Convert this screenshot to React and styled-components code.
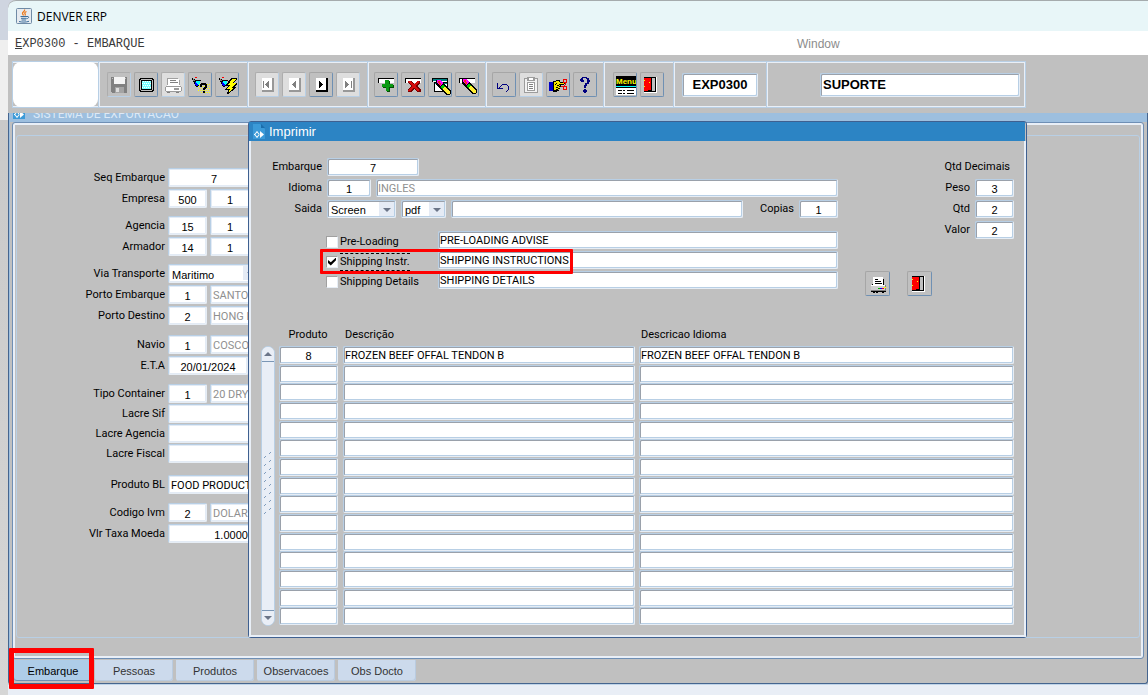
import React from 'react';
import styled, { createGlobalStyle, css } from 'styled-components';

const GlobalStyle = createGlobalStyle`
  * {
    box-sizing: border-box;
  }

  body {
    margin: 0;
    background: #d4d4d4;
    font-family: "Liberation Sans", Arial, sans-serif;
    font-size: 11px;
    color: #000;
  }

  button, input, select {
    font: inherit;
    color: inherit;
    margin: 0;
    padding: 0;
  }
`;

/* ---------- icons ---------- */

const Glyph = ({ children, size = 22 }) => (
  <svg width={size} height={size} viewBox={`0 0 ${size} ${size}`} shapeRendering="crispEdges" aria-hidden="true">
    {children}
  </svg>
);

const SaveIcon = () => (
  <Glyph>
    <path d="M3 3h16v16H4l-1-1z" fill="#808080" />
    <path d="M6 3h11v7H6z" fill="#f4f4f4" />
    <path d="M4 4h1v1H4zM17 4h1v1h-1z" fill="#c0c0c0" />
    <path d="M7 13h9v6H7z" fill="#a4a4a4" />
    <path d="M8 14h3v4H8z" fill="#dcdcdc" />
  </Glyph>
);

const MonitorIcon = () => (
  <Glyph>
    <path d="M5 4h13v1h1v12h-1v1H5v-1H4V5h1z" fill="#000" />
    <path d="M5 6h1V5h11v1h1v10h-1v1H6v-1H5z" fill="#c0c0c0" />
    <path d="M6 6h11v10H6z" fill="#000" />
    <path d="M7 7h9v8H7z" fill="#7ff" />
    <path d="M8 7.500h8M7 9.500h9M8 11.500h8M7 13.500h9" stroke="#fff" strokeDasharray="1 1" />
  </Glyph>
);

const PrintDisabledIcon = () => (
  <Glyph>
    <path d="M6 4h10v1h1v6H6z" fill="#fff" />
    <path d="M6 4h10v1H6zM5 4h1v8H5zM17 6h1v6h-1z" fill="#a0a0a0" />
    <path d="M8 6h6v1H8zM8 8h8v1H8z" fill="#808080" />
    <path d="M5 11h13v1H5zM3 13h17v4H3z" fill="#fff" />
    <path d="M4 12h15v1H4zM3 13h1v4H3zM19 13h1v4h-1zM4 17h15v1H4zM12 14h5v2h-5z" fill="#9a9a9a" />
    <path d="M5 18h3v1H5zM14 18h3v1h-3z" fill="#808080" />
  </Glyph>
);

const torch = (
  <>
    <path d="M3 4h1v1h2v1h6v1h-1v4h-1v1H9v1H7v-1H6v-2H5V8H4V6H3z" fill="#000" />
    <path d="M7 7h4v3h-1v1H9v-1H8V9H7z" fill="#0ff" />
    <path d="M6 8h1v1h1v1h1v2H7v-1H6z" fill="#00f" />
    <path d="M4 5h1v1h1v1H4z" fill="#808080" />
    <path d="M6 3h2v1H6z" fill="#f00" />
  </>
);

const FindIcon = () => (
  <Glyph>
    {torch}
    <path d="M10 10.500h11M9 12.500h12M10 14.500h11M9 16.500h12M12 18.500h9" stroke="#ff0" strokeDasharray="1 1" />
    <path d="M12 9h5v1h1v4h-1v1h-1v1h-2v-2h1v-1h1v-2h-3v2h-2v-3h1zM14 17h2v2h-2z" fill="#000" />
  </Glyph>
);

const RunFindIcon = () => (
  <Glyph>
    {torch}
    <path d="M15 4h6v1l-3 4h3v1l-3 3h2v1l-8 6h-1l1-4H9v-1l3-3h-2v-1z" fill="#000" />
    <path d="M16 5h4l-3 4h3l-4 5h2l-5 4 1-3h-3l3-4h-2z" fill="#ff0" />
  </Glyph>
);

const NavIcon = ({ shape, off }) => (
  <Glyph>
    <path d="M6 4h12v14H6z" fill={off ? '#989898' : '#000'} />
    <path d="M6 4h10v12H6z" fill="#fff" />
    <path d={shape} fill={off ? '#808080' : '#000'} />
  </Glyph>
);

const navShapes = {
  first: 'M7 7h1v7H7zM12 7h1v7h-1v-1h-1v-1h-1v-1H9v-1h1V9h1V8h1z',
  prev: 'M12 7h1v7h-1v-1h-1v-1h-1v-1H9v-1h1V9h1V8h1z',
  next: 'M9 7h1v1h1v1h1v1h1v1h-1v1h-1v1h-1v1H9z',
  last: 'M8 7h1v1h1v1h1v1h1v1h-1v1h-1v1H9v1H8zM14 7h1v7h-1z',
};

const fieldBar = (
  <>
    <path d="M3 4h16v5H3z" fill="#000" />
    <path d="M4 5h15v4H4z" fill="#fff" />
  </>
);

const InsertIcon = () => (
  <Glyph>
    {fieldBar}
    <path d="M11 7h4v4h4v3h-4v4h-3v-4H8v-3h3z" fill="#044d04" />
    <path d="M10 6h4v4h4v3h-4v4h-3v-4H7v-3h3z" fill="#0a9a12" />
  </Glyph>
);

const DeleteIcon = () => (
  <Glyph>
    {fieldBar}
    <path d="M6 7h3l3 3 3-3h3v2l-3 3 4 4v2h-3l-4-3-3 3H6v-2l3-4-3-3z" fill="#700" />
    <path d="M6 7h2l4 3 3-3h2v1l-4 4 4 4v1h-2l-3-3-4 3H6v-1l4-4-4-4z" fill="#d40b0b" />
  </Glyph>
);

const pencil = (
  <>
    <path d="M6 5h5l10 11v3l-2 1h-3L6 9z" fill="#000" />
    <path d="M7 5h3l3 3-3 3-3-3z" fill="#f0f" />
    <path d="M8 6h2v2h1v2H9V8H8z" fill="#ff2020" />
    <path d="M13 9l2 3-3 2-2-2z" fill="#0c0" />
    <path d="M15 12l5 4v2l-1 1h-2l-5-5z" fill="#fe3" />
  </>
);

const ClearFormIcon = () => (
  <Glyph>
    <path d="M3 4h16v14H5V8H3z" fill="#000" />
    <path d="M4 5h14v2H4z" fill="#008080" />
    <path d="M4 7h14v1H4zM6 9h12v8H6z" fill="#fff" />
    <path d="M6 9h12v1H6z" fill="#008080" />
    <g transform="translate(1 1)">{pencil}</g>
  </Glyph>
);

const ClearRecordIcon = () => (
  <Glyph>
    {fieldBar}
    {pencil}
  </Glyph>
);

const UndoIcon = () => (
  <Glyph>
    <path d="M4 9h1v5h1v-1h1v-1h1v-1h1v-1h5v1h1v1h1v4h-1v1h-1v1h-1v-1h1v-1h1v-4h-1v-1H9v1H8v1H7v1h3v1H4z" fill="#000080" />
  </Glyph>
);

const PasteDisabledIcon = () => (
  <Glyph>
    <path d="M4 4h14v15H4z" fill="#9c9c9c" />
    <path d="M5 5h12v13H5z" fill="#f2f2f2" />
    <path d="M7 3h8v4H7zM7 8h8v9H7z" fill="#9c9c9c" />
    <path d="M9 4h4v2H9zM8 9h6v7H8z" fill="#fff" />
    <path d="M9 10h4v1H9zM9 12h4v1H9zM9 14h4v1H9z" fill="#808080" />
  </Glyph>
);

const CutHandIcon = () => (
  <Glyph>
    <path d="M2 8h4v9H2z" fill="#0000c8" />
    <path d="M6 7h3V6h4v2h4v1h1v1h-1v1h-3v2h-1v2h-1v2h-2v1H6z" fill="#000" />
    <path d="M7 8h2V7h3v1h1v1h4v1h-5v1h1v1h-1v1h1v1h-2v1h1v1H7z" fill="#f5e600" />
    <path d="M9 9h1v1H9zM10 11h2v1h-2zM9 13h2v1H9zM9 15h2v1H9zM8 10h1v1H8z" fill="#000" />
    <path d="M16.500 5.500h3v3h-3zM16.500 12.500h3v3h-3zM14 12.500h3l2-3" stroke="#e00" fill="none" />
  </Glyph>
);

const HelpIcon = () => (
  <Glyph>
    <path d="M8 3h5v1h2v2h1v2h-1v2h-2v2h-1v2h-2v-3h1V9h2V5h-1V4h-3v2h1v2H7V7H6V5h1V4h1zM10 15h2v1h1v2h-1v1h-2v-1H9v-2h1z" fill="#000080" />
  </Glyph>
);

const MenuWord = styled.text`
  font-family: "Liberation Sans Narrow", "Liberation Sans", Arial, sans-serif;
  font-size: 8px;
  font-weight: bold;
  fill: #ffff00;
`;

const MenuIcon = () => (
  <Glyph>
    <path d="M2 2h20v9H2z" fill="#000" />
    <MenuWord x="2" y="10">Menu</MenuWord>
    <path d="M2 12h20v1H2z" fill="#0ff" />
    <path d="M2 14h20v7H2z" fill="#fff" />
    <path d="M2 11h20v1H2zM2 13h20v1H2zM4 16h4v1H4zM9 16h2v1H9zM13 16h7v1h-7zM4 19h4v1H4zM9 19h2v1H9zM13 19h7v1h-7z" fill="#000" />
  </Glyph>
);

const DoorIcon = () => (
  <Glyph>
    <path d="M3 3h13v16H3z" fill="#fff" />
    <path d="M3 3h12v15H3z" fill="#000" />
    <path d="M11 4h3v13h-3z" fill="#c0c0c0" />
    <path d="M3 4h7v12H9v1H3z" fill="#f00" />
    <path d="M8 8h1v1H8zM3 6h1v1H3zM3 12h1v1H3z" fill="#ff0" />
    <path d="M10 4h1v13h-1zM7 16h3v1H7z" fill="#000" />
  </Glyph>
);

const PrintIcon = () => (
  <Glyph>
    <path d="M6 4h10v8H6z" fill="#fff" />
    <path d="M8 6h3v1H8zM8 8h6v1H8zM8 10h7v1H8zM16 6h1v6h-1zM5 11h1v1H5z" fill="#000" />
    <path d="M4 12h15v6H4z" fill="#808080" />
    <path d="M4 12h14v1H4z" fill="#fff" />
    <path d="M4 13h14v4H4z" fill="#cfcfcf" />
    <path d="M4 18h15v1H4zM6 19h2v1H6zM9 19h2v1H9zM15 19h2v1h-2z" fill="#000" />
    <path d="M11 15h2v1h-2z" fill="#0a0" />
    <path d="M13 15h2v1h-2z" fill="#00f" />
    <path d="M15 15h2v1h-2z" fill="#f00" />
    <path d="M17 14h2v1h-2z" fill="#ff0" />
  </Glyph>
);

const JavaIcon = () => (
  <svg width="16" height="16" viewBox="0 0 16 16" aria-hidden="true">
    <rect x="0.500" y="0.500" width="15" height="15" rx="1" fill="#e6ebf0" stroke="#6f8ba6" />
    <path d="M8.500 1.500c1 2-2.500 2.500-2 4.200.2.800 1 1.300 1 1.800M10.500 3.500c-2 1-2 1.700-1.300 2.600.4.600 0 1-.4 1.400" stroke="#ec7a1c" strokeWidth="1.300" fill="none" />
    <path d="M4.500 8.500h6.500M5 10.300h5.500M5.500 12h4.500M11 8.500c2.500-.5 2 2-.5 2.300" stroke="#3d6f9c" fill="none" />
    <path d="M3 13.500c2.500.8 7.500.8 10-.2" stroke="#3d6f9c" fill="none" />
  </svg>
);

const DocIcon = () => (
  <svg width="13" height="15" viewBox="0 0 13 15" aria-hidden="true">
    <path d="M0 0h7l5 5v10H0z" fill="#3c9ad8" />
    <path d="M8 0l4 4H8z" fill="#1b6dab" />
    <path d="M4 7v7M1 10.500h2" stroke="#fff" />
    <circle cx="4" cy="10.500" r="2" fill="#3c9ad8" stroke="#fff" />
    <path d="M7 7l4 3.500L7 14z" fill="#fff" />
  </svg>
);

/* ---------- shell ---------- */

const Desktop = styled.div`
  min-height: 100vh;
  padding-left: 8px;
  display: flex;
  background: linear-gradient(#cfd5e0 0, #cfd5e0 40px, #efefef 40px, #efefef 120px, #c9c9c9 120px, #d6d6d6 100%);
`;

const AppWindow = styled.div`
  flex: 1;
  min-width: 0;
  display: flex;
  flex-direction: column;
  background: #c0c0c0;
  border-radius: 8px 0 0 0;
  overflow: hidden;
`;

const TitleBar = styled.header`
  display: flex;
  align-items: center;
  gap: 5px;
  height: 31px;
  padding-left: 8px;
  background: #e8f6f8;
  border-top: 1px solid #a5abad;
  border-radius: 8px 0 0 0;
  font-family: "Open Sans", "Noto Sans", sans-serif;
  font-size: 12px;
`;

const MenuBar = styled.nav`
  display: flex;
  align-items: center;
  height: 24px;
  padding: 1px 7px 0;
  background: #fff;
`;

const MenuLink = styled.a`
  flex: 0 0 782px;
  color: #3a3a3a;
  font-family: "Liberation Mono", "Courier New", monospace;
  font-size: 12px;
  text-decoration: none;

  &:last-child {
    flex: none;
    color: #8c8c8c;
    font-family: "Liberation Sans", Arial, sans-serif;
  }
`;

/* ---------- toolbar ---------- */

const ToolbarArea = styled.div`
  padding: 6px 122px 5px 4px;
`;

const Toolbar = styled.div`
  display: flex;
  height: 47px;
  border: 1px solid #b8cfe5;
  box-shadow: inset 0 1px 0 #e9eff7, inset 0 -1px 0 #e9eff7, inset -1px 0 0 #e9eff7;
`;

const Logo = styled.div`
  width: 85px;
  background: #fff;
  border-radius: 8px;
`;

const Section = styled.div`
  display: flex;
  align-items: center;
  gap: 3px;
  flex: ${({ $grow }) => ($grow ? '1' : 'none')};
  justify-content: ${({ $grow }) => ($grow ? 'flex-end' : 'flex-start')};
  padding: 0 ${({ $pad }) => $pad}px;
  border-left: 1px solid #b8cfe5;
  box-shadow: inset 1px 0 0 #e9eff7;
`;

const IconButton = styled.button`
  width: 24px;
  height: 25px;
  display: flex;
  align-items: center;
  justify-content: center;
  flex: none;
  background: #c0c0c0;
  border: 1px solid;
  border-color: #a6a6a6 #6f90b3 #6f90b3 #a6a6a6;
  border-radius: 2px;

  &:disabled {
    border-color: #adadad #b8cfe5 #b8cfe5 #adadad;
    background: ${({ $flat }) => ($flat ? '#c0c0c0' : '#dedede')};
  }
`;

/* ---------- fields ---------- */

const fieldFrame = css`
  height: ${({ $tall }) => ($tall ? '19px' : '18px')};
  background: #fff;
  border: 1px solid;
  border-color: #b8cfe5 #e6edf5 #e6edf5 #b8cfe5;
  border-radius: 2px;
  box-shadow: ${({ $tall }) =>
    $tall ? 'inset 0 0 0 1px #e3ebf5' : 'inset 1px 1px 0 #9aa1ab, inset -1px -1px 0 #b8cfe5'};
`;

const Field = styled.input`
  ${fieldFrame}
  width: ${({ $width }) => ($width ? `${$width}px` : 'auto')};
  flex: ${({ $width }) => ($width ? 'none' : '1')};
  min-width: 0;
  padding: ${({ $tall }) => ($tall ? '2px 2px 0' : '1px 1px 0')};
  font-family: ${({ $align }) => ($align ? '"Liberation Sans", Arial' : 'Roboto, "Liberation Sans"')}, sans-serif;
  text-align: ${({ $align }) => $align || 'left'};
  color: ${({ $muted }) => ($muted ? '#8f8f8f' : '#000')};
  outline: none;
`;

const BarField = styled(Field)`
  height: 24px;
  padding: 0 2px;
  font-family: "Liberation Sans", Arial, sans-serif;
  font-size: 13px;
  font-weight: bold;
`;

const SelectBox = styled.span`
  ${fieldFrame}
  position: relative;
  display: flex;
  width: ${({ $width }) => $width}px;
  flex: none;

  svg {
    position: absolute;
    right: 1px;
    top: 1px;
    pointer-events: none;
  }
`;

const Select = styled.select`
  appearance: none;
  width: 100%;
  border: 0;
  padding: 2px 0 0 3px;
  background: transparent;
  outline: none;
`;

const Picker = ({ id, value, width, label, tall }) => (
  <SelectBox $width={width} $tall={tall}>
    <Select id={id} aria-label={label} defaultValue={value}>
      <option>{value}</option>
    </Select>
    <svg width="15" height="14" viewBox="0 0 15 14" aria-hidden="true">
      <path d="M0 0h15v14H0z" fill="#e5ebf5" />
      <path d="M4 6h8l-4 4z" fill="#6b7588" />
    </svg>
  </SelectBox>
);

/* ---------- main form ---------- */

const Workspace = styled.main`
  position: relative;
  flex: 1;
  display: flex;
  flex-direction: column;
  border: 1px solid #45658f;
  border-top: 0;
  border-radius: 0 0 3px 3px;
  box-shadow: inset 1px 0 0 #9dbfdf;
`;

const WorkspaceTitle = styled.div`
  height: 9px;
  display: flex;
  align-items: flex-end;
  gap: 7px;
  padding-left: 4px;
  overflow: hidden;
  background: #9dbfdf;
  color: #dce9f6;
  font-family: Roboto, sans-serif;
  font-size: 12px;
  line-height: 16px;

  svg {
    margin-bottom: 3px;
  }
`;

const Panel = styled.div`
  flex: 1;
  margin: 0 3px;
  padding: 12px 3px 20px;
  display: flex;
  border: 1px solid #6f8fb5;
  border-radius: 3px;
  box-shadow: inset 0 0 0 2px #e9eff7;
`;

const Canvas = styled.form`
  flex: 1;
  padding-top: 32px;
  border: 1px solid #b8cfe5;
  border-radius: 3px;
`;

const Group = styled.div`
  display: flex;
  flex-direction: column;
  gap: ${({ $gap }) => $gap || 2}px;
  margin-top: ${({ $space }) => $space || 0}px;
`;

const FormRow = styled.div`
  display: flex;
  gap: 3px;
`;

const FormLabel = styled.label`
  width: 148px;
  height: 19px;
  font-family: Roboto, "Liberation Sans", sans-serif;
  line-height: 20px;
  text-align: right;
`;

const groups = [
  { rows: [
    ['Seq Embarque', { value: '7', width: 92, align: 'center' }],
    ['Empresa', { value: '500', width: 39, align: 'center' }, { value: '1', width: 40, align: 'center' }],
  ] },
  { space: 8, rows: [
    ['Agencia', { value: '15', width: 39, align: 'center' }, { value: '1', width: 40, align: 'center' }],
    ['Armador', { value: '14', width: 39, align: 'center' }, { value: '1', width: 40, align: 'center' }],
  ] },
  { space: 8, rows: [
    ['Via Transporte', { value: 'Maritimo', width: 92, select: true }],
    ['Porto Embarque', { value: '1', width: 39, align: 'center' }, { value: 'SANTOS', width: 200, muted: true }],
    ['Porto Destino', { value: '2', width: 39, align: 'center' }, { value: 'HONG KONG', width: 200, muted: true }],
  ] },
  { space: 10, rows: [
    ['Navio', { value: '1', width: 39, align: 'center' }, { value: 'COSCO', width: 200, muted: true }],
    ['E.T.A', { value: '20/01/2024', width: 80, align: 'center' }],
  ] },
  { space: 9, gap: 1, rows: [
    ['Tipo Container', { value: '1', width: 39, align: 'center' }, { value: '20 DRY', width: 200, muted: true }],
    ['Lacre Sif', { value: '', width: 200 }],
    ['Lacre Agencia', { value: '', width: 200 }],
    ['Lacre Fiscal', { value: '', width: 200 }],
  ] },
  { space: 12, rows: [
    ['Produto BL', { value: 'FOOD PRODUCTS', width: 200 }],
  ] },
  { space: 9, rows: [
    ['Codigo Ivm', { value: '2', width: 39, align: 'center' }, { value: 'DOLAR', width: 200, muted: true }],
    ['Vlr Taxa Moeda', { value: '1.00000', width: 89, align: 'right' }],
  ] },
];

const MainForm = () => (
  <Canvas>
    {groups.map((group, g) => (
      <Group key={g} $space={group.space} $gap={group.gap}>
        {group.rows.map(([label, ...fields]) => {
          const id = label.replace(/[^a-z]/gi, '').toLowerCase();
          return (
            <FormRow key={label}>
              <FormLabel htmlFor={id}>{label}</FormLabel>
              {fields.map((f, i) => f.select ? (
                <Picker key={i} id={id} value={f.value} width={f.width} tall />
              ) : (
                <Field
                  key={i}
                  id={i === 0 ? id : undefined}
                  aria-label={i === 0 ? undefined : label}
                  defaultValue={f.value}
                  $tall
                  $width={f.width}
                  $align={f.align}
                  $muted={f.muted}
                />
              ))}
            </FormRow>
          );
        })}
      </Group>
    ))}
  </Canvas>
);

/* ---------- tabs ---------- */

const Tabs = styled.div`
  display: flex;
  gap: 3px;
  height: 24px;
  padding: 1px 4px 2px 5px;
`;

const TabSlot = styled.div`
  position: relative;
  display: flex;
`;

const Tab = styled.button`
  width: 78px;
  border: 0;
  border-radius: 0 0 3px 3px;
  background: ${({ $active }) => ($active ? '#aecde8' : '#ccdaec')};
  box-shadow: ${({ $active }) => ($active ? 'inset 0 -1px 0 #6f90b3' : 'inset -1px -1px 0 #b9cbe0')};
  color: ${({ $active }) => ($active ? '#000' : '#333')};
`;

const Highlight = styled.div`
  position: absolute;
  z-index: 2;
  border: ${({ $thick }) => ($thick ? 5 : 3)}px solid #ff0000;
  border-radius: 1px;
  pointer-events: none;
`;

const TabHighlight = styled(Highlight)`
  inset: -12px -2px -8px -5px;
`;

const RowHighlight = styled(Highlight)`
  left: -6px;
  top: -2px;
  width: 253px;
  height: 25px;
`;

const StatusBar = styled.footer`
  height: 11px;
  background: #e9eef6;
  border-top: 1px solid #c0d4e8;
`;

/* ---------- dialog ---------- */

const Dialog = styled.section`
  position: absolute;
  left: 239px;
  right: 120px;
  top: 8px;
  background: #c0c0c0;
  border: 1px solid #3f6090;
  border-radius: 3px;
`;

const DialogTitle = styled.h1`
  display: flex;
  align-items: center;
  gap: 3px;
  height: 19px;
  margin: 0 1px 0 0;
  padding-left: 4px;
  background: #2c84c4;
  color: #fff;
  font-size: 13px;
  font-weight: normal;
`;

const DialogBody = styled.div`
  padding: 17px 10px 9px 0;
  border: 2px solid #e9eff7;
  border-top: 0;
`;

const DialogTop = styled.div`
  display: flex;
`;

const Filters = styled.div`
  flex: 1;
  min-width: 0;
`;

const Stack = styled.div`
  display: flex;
  flex-direction: column;
  gap: 3px;
`;

const DialogRow = styled.div`
  display: flex;
  align-items: center;
  gap: 5px;
`;

const DialogLabel = styled.label`
  width: ${({ $wide }) => ($wide ? '71px' : 'auto')};
  font-family: Roboto, "Liberation Sans", sans-serif;
  line-height: 18px;
  text-align: right;
`;

const CopiesLabel = styled(DialogLabel)`
  padding-left: 12px;
`;

const Reports = styled.div`
  display: flex;
  flex-direction: column;
  gap: 2px;
  margin-top: 13px;
  padding-left: 75px;
`;

const ReportRow = styled.div`
  position: relative;
  display: flex;
  height: 18px;
`;

const CheckLabel = styled.label`
  display: flex;
  align-items: center;
  gap: 2px;
  width: 112px;
  padding-top: 3px;
  font-family: Roboto, "Liberation Sans", sans-serif;
`;

const CheckText = styled.span`
  line-height: 16px;
  border: ${({ $focus }) => ($focus ? '1px dashed #000' : '1px solid transparent')};
  border-width: 1px 0;
`;

const Check = styled.input`
  appearance: none;
  width: 12px;
  height: 12px;
  background: #fff;
  border: 1px solid;
  border-color: #a0a0a0 #e6edf5 #e6edf5 #a0a0a0;

  &:checked::after {
    content: "";
    display: block;
    width: 8px;
    height: 8px;
    margin: 1px;
    background: #000;
    clip-path: polygon(0 30%, 35% 60%, 100% 0, 100% 35%, 35% 100%, 0 70%);
  }
`;

const Side = styled.div`
  width: 176px;
`;

const SideRow = styled(DialogRow)`
  justify-content: flex-end;
`;

const SideTitle = styled.div`
  padding-right: 4px;
  font-family: Roboto, "Liberation Sans", sans-serif;
  line-height: 18px;
  text-align: right;
`;

const Actions = styled.div`
  display: flex;
  gap: 17px;
  margin-top: 32px;
  padding-left: 27px;
`;

const ActionButton = styled(IconButton)`
  width: 25px;
`;

const GridArea = styled.div`
  display: flex;
  align-items: flex-end;
  gap: 5px;
  margin: 29px 0 0 10px;
`;

const Scroll = styled.div`
  width: 14px;
  height: 280px;
  display: flex;
  flex-direction: column;
  align-items: center;
  justify-content: space-between;
  background: #e9eef6;
  border: 1px solid #b8cfe5;
  border-radius: 7px;
`;

const ScrollButton = styled.button`
  width: 12px;
  height: 15px;
  display: flex;
  align-items: center;
  justify-content: center;
  background: #e9eef6;
  border: 0;
  border-bottom: ${({ $up }) => ($up ? '1px solid #7a96b5' : '0')};
  border-top: ${({ $up }) => ($up ? '0' : '1px solid #7a96b5')};
  border-radius: ${({ $up }) => ($up ? '6px 6px 0 0' : '0 0 6px 6px')};
`;

const Grid = styled.table`
  flex: 1;
  height: 301px;
  margin-left: -1px;
  border-collapse: collapse;
  table-layout: fixed;

  th {
    height: 21px;
    padding: 0 2px 3px;
    font-family: Roboto, "Liberation Sans", sans-serif;
    font-weight: normal;
    text-align: left;
  }

  th:first-child {
    width: 64px;
    padding-right: 8px;
    text-align: center;
  }

  th:nth-child(2) {
    width: 296px;
  }

  td {
    padding: 0 4px 0 0;
    vertical-align: top;
  }

  td:first-child {
    padding-right: 5px;
  }

  td:last-child {
    padding-right: 0;
  }
`;

const Cell = styled(Field)`
  display: block;
  width: 100%;
`;

const decimals = [['Peso', '3'], ['Qtd', '2'], ['Valor', '2']];

const reports = [
  { label: 'Pre-Loading', title: 'PRE-LOADING ADVISE' },
  { label: 'Shipping Instr.', title: 'SHIPPING INSTRUCTIONS', checked: true },
  { label: 'Shipping Details', title: 'SHIPPING DETAILS' },
];

const products = Array.from({ length: 15 }, (_, i) =>
  i === 0 ? ['8', 'FROZEN BEEF OFFAL TENDON B', 'FROZEN BEEF OFFAL TENDON B'] : ['', '', '']
);

const columns = ['Produto', 'Descrição', 'Descricao Idioma'];

const PrintDialog = () => (
  <Dialog>
    <DialogTitle><DocIcon />Imprimir</DialogTitle>
    <DialogBody>
      <DialogTop>
        <Filters>
          <Stack>
            <DialogRow>
              <DialogLabel $wide htmlFor="d-embarque">Embarque</DialogLabel>
              <Field id="d-embarque" $width={92} $align="center" defaultValue="7" />
            </DialogRow>
            <DialogRow>
              <DialogLabel $wide htmlFor="d-idioma">Idioma</DialogLabel>
              <Field id="d-idioma" $width={44} $align="center" defaultValue="1" />
              <Field aria-label="Nome do idioma" $muted defaultValue="INGLES" />
            </DialogRow>
            <DialogRow>
              <DialogLabel $wide htmlFor="d-saida">Saida</DialogLabel>
              <Picker id="d-saida" width={69} value="Screen" />
              <Picker label="Formato" width={45} value="pdf" />
              <Field aria-label="Arquivo" />
              <CopiesLabel htmlFor="d-copias">Copias</CopiesLabel>
              <Field id="d-copias" $width={39} $align="center" defaultValue="1" />
            </DialogRow>
          </Stack>
          <Reports>
            {reports.map((r) => (
              <ReportRow key={r.label}>
                <CheckLabel>
                  <Check type="checkbox" defaultChecked={r.checked} />
                  <CheckText $focus={r.checked}>{r.label}</CheckText>
                </CheckLabel>
                <Field aria-label={r.label} defaultValue={r.title} />
                {r.checked && <RowHighlight />}
              </ReportRow>
            ))}
          </Reports>
        </Filters>
        <Side>
          <Stack>
            <SideTitle>Qtd Decimais</SideTitle>
            {decimals.map(([label, value]) => (
              <SideRow key={label}>
                <DialogLabel htmlFor={`dec-${label}`}>{label}</DialogLabel>
                <Field id={`dec-${label}`} $width={39} $align="center" defaultValue={value} />
              </SideRow>
            ))}
          </Stack>
          <Actions>
            <ActionButton type="button" aria-label="Imprimir"><PrintIcon /></ActionButton>
            <ActionButton type="button" aria-label="Sair"><DoorIcon /></ActionButton>
          </Actions>
        </Side>
      </DialogTop>
      <GridArea>
        <Scroll>
          <ScrollButton type="button" $up aria-label="Subir">
            <svg width="8" height="4" viewBox="0 0 8 4"><path d="M0 4h8L4 0z" fill="#6b7588" /></svg>
          </ScrollButton>
          <svg width="10" height="68" viewBox="0 0 10 68" aria-hidden="true">
            {Array.from({ length: 8 }, (_, i) => (
              <path key={i} d={`M1 ${i * 8 + 6}l2-2M6 ${i * 8 + 2}l2-2`} stroke="#7f9cbd" />
            ))}
          </svg>
          <ScrollButton type="button" aria-label="Descer">
            <svg width="8" height="4" viewBox="0 0 8 4"><path d="M0 0h8L4 4z" fill="#6b7588" /></svg>
          </ScrollButton>
        </Scroll>
        <Grid>
          <thead>
            <tr>{columns.map((c) => <th key={c}>{c}</th>)}</tr>
          </thead>
          <tbody>
            {products.map((row, r) => (
              <tr key={r}>
                {row.map((value, c) => (
                  <td key={c}>
                    <Cell aria-label={`${columns[c]} ${r + 1}`} $align={c === 0 ? 'center' : undefined} defaultValue={value} />
                  </td>
                ))}
              </tr>
            ))}
          </tbody>
        </Grid>
      </GridArea>
    </DialogBody>
  </Dialog>
);

/* ---------- page ---------- */

const Tool = ({ label, children, ...rest }) => (
  <IconButton type="button" aria-label={label} {...rest}>{children}</IconButton>
);

const tabs = ['Embarque', 'Pessoas', 'Produtos', 'Observacoes', 'Obs Docto'];

const App = () => (
  <Desktop>
    <GlobalStyle />
    <AppWindow>
      <TitleBar><JavaIcon />DENVER ERP</TitleBar>
      <MenuBar>
        <MenuLink href="#embarque"><u>E</u>XP0300 - EMBARQUE</MenuLink>
        <MenuLink href="#window">Window</MenuLink>
      </MenuBar>
      <ToolbarArea>
        <Toolbar>
          <Logo />
          <Section $pad={8}>
            <Tool label="Salvar" disabled $flat><SaveIcon /></Tool>
            <Tool label="Tela"><MonitorIcon /></Tool>
            <Tool label="Imprimir tela" disabled><PrintDisabledIcon /></Tool>
            <Tool label="Consultar"><FindIcon /></Tool>
            <Tool label="Executar consulta"><RunFindIcon /></Tool>
          </Section>
          <Section $pad={7}>
            <Tool label="Primeiro" disabled><NavIcon off shape={navShapes.first} /></Tool>
            <Tool label="Anterior" disabled><NavIcon off shape={navShapes.prev} /></Tool>
            <Tool label="Proximo"><NavIcon shape={navShapes.next} /></Tool>
            <Tool label="Ultimo" disabled><NavIcon off shape={navShapes.last} /></Tool>
          </Section>
          <Section $pad={6}>
            <Tool label="Inserir"><InsertIcon /></Tool>
            <Tool label="Excluir"><DeleteIcon /></Tool>
            <Tool label="Limpar tela"><ClearFormIcon /></Tool>
            <Tool label="Limpar registro"><ClearRecordIcon /></Tool>
          </Section>
          <Section $pad={6}>
            <Tool label="Desfazer"><UndoIcon /></Tool>
            <Tool label="Colar" disabled><PasteDisabledIcon /></Tool>
            <Tool label="Recortar"><CutHandIcon /></Tool>
            <Tool label="Ajuda"><HelpIcon /></Tool>
          </Section>
          <Section $pad={9}>
            <Tool label="Menu"><MenuIcon /></Tool>
            <Tool label="Sair do sistema"><DoorIcon /></Tool>
          </Section>
          <Section $pad={8}>
            <BarField aria-label="Tela" $width={76} $align="center" defaultValue="EXP0300" />
          </Section>
          <Section $grow $pad={5}>
            <BarField aria-label="Usuario" $width={200} defaultValue="SUPORTE" />
          </Section>
        </Toolbar>
      </ToolbarArea>
      <Workspace>
        <WorkspaceTitle><DocIcon />SISTEMA DE EXPORTACAO</WorkspaceTitle>
        <Panel>
          <MainForm />
        </Panel>
        <Tabs>
          {tabs.map((name, i) => (
            <TabSlot key={name}>
              <Tab type="button" $active={i === 0}>{name}</Tab>
              {i === 0 && <TabHighlight $thick />}
            </TabSlot>
          ))}
        </Tabs>
        <PrintDialog />
      </Workspace>
      <StatusBar />
    </AppWindow>
  </Desktop>
);

export default App;
